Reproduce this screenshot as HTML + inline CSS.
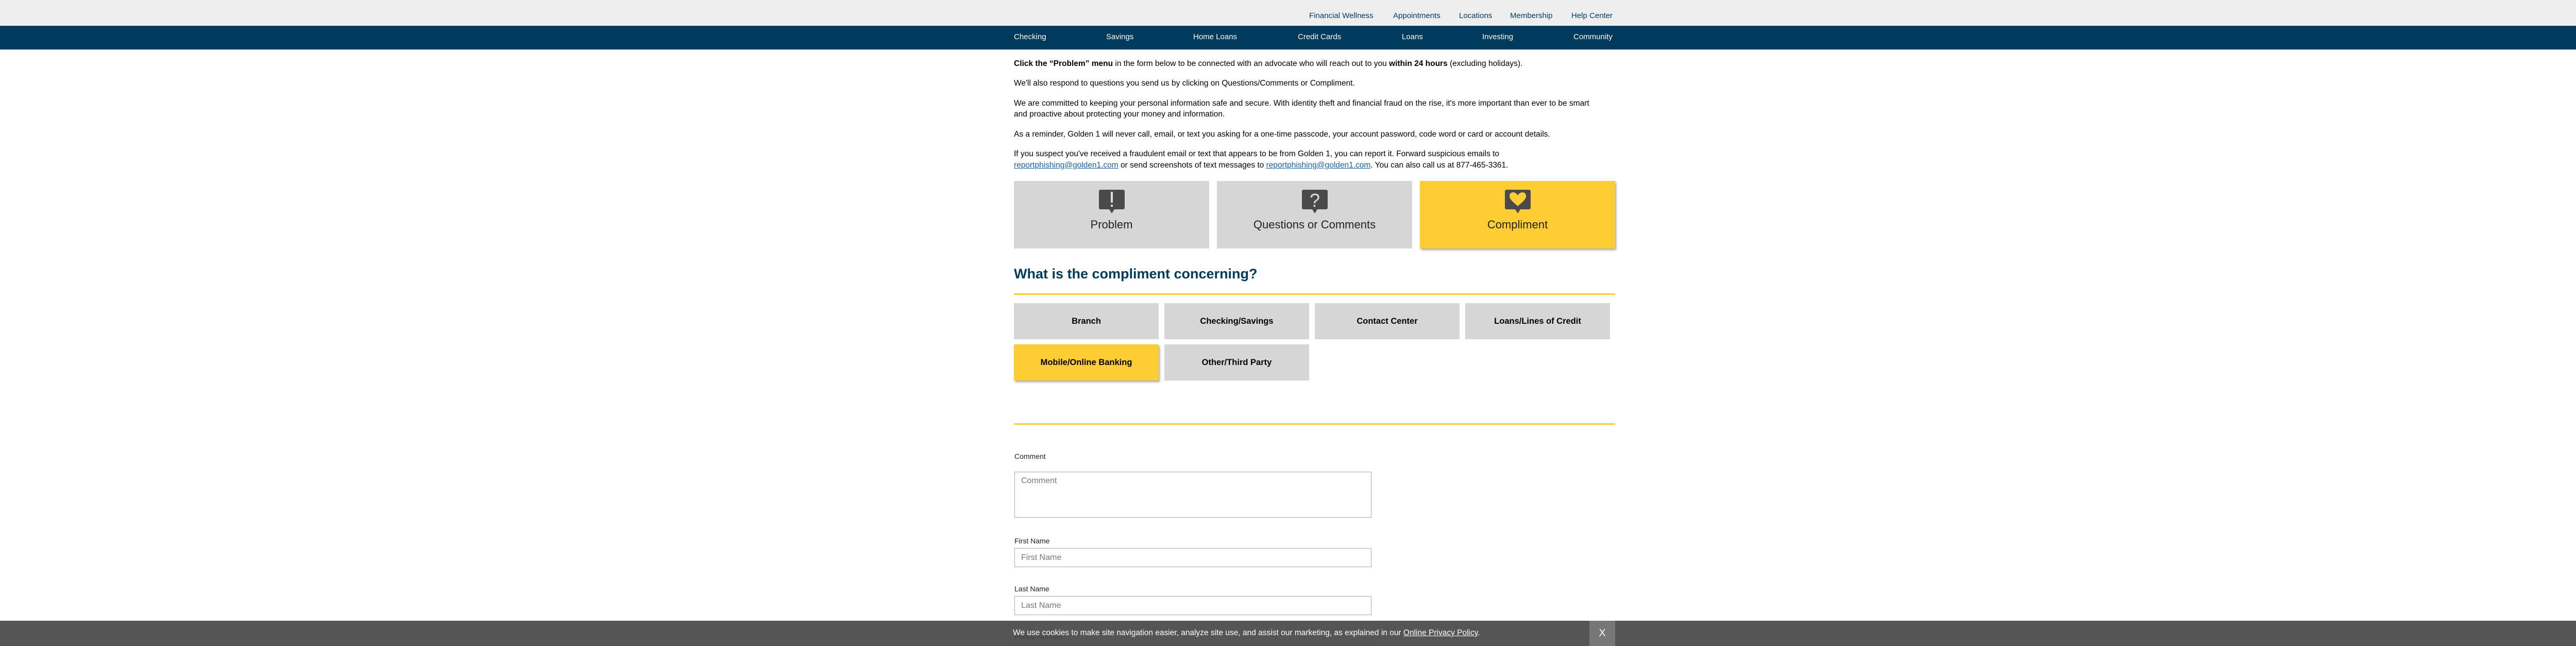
<!DOCTYPE html>
<html><head><meta charset="utf-8"><style>
*{margin:0;padding:0;box-sizing:border-box}
html,body{width:5120px;height:1253px;overflow:hidden}
body{background:#fff;font-family:"Liberation Sans",Arial,sans-serif;color:#000}
#w{position:relative;width:5120px;height:1253px;overflow:hidden}
.a{position:absolute;white-space:nowrap}
#top{position:absolute;left:0;top:0;width:5103px;height:50px;background:#eee}
#nav{position:absolute;left:0;top:50px;width:5103px;height:46px;background:#003a5d}
.tl{font-size:15px;color:#003a5d;top:22px}
.nl{font-size:15px;color:#fff;top:63px}
.p{font-size:15.5px;left:1968px}
.p a{color:#1a5fa8;text-decoration:underline}
.big{position:absolute;top:351px;height:131px;width:379px;background:#d6d6d6;text-align:center}
.big svg{position:absolute;top:17px;left:50%;margin-left:-25px}
.big span{position:absolute;left:0;right:0;top:72px;font-size:22px;color:#222}
.sm{position:absolute;height:70px;width:281px;background:#d6d6d6;text-align:center;line-height:70px;font-size:16.5px;font-weight:bold}
.yl{position:absolute;left:1968px;width:1167px;height:3px;background:#fecd34}
.lab{font-size:14px;color:#222;left:1969px}
.inp{position:absolute;left:1969px;width:693px;border:1px solid #aaa;background:#fff;font-size:16px;color:#777;padding-left:12px}
</style></head><body><div id="w">
<div id="top"></div>
<div class="a tl" style="left:2541px">Financial Wellness</div>
<div class="a tl" style="left:2704px">Appointments</div>
<div class="a tl" style="left:2832px">Locations</div>
<div class="a tl" style="left:2931px">Membership</div>
<div class="a tl" style="left:3050px">Help Center</div>
<div id="nav"></div>
<div class="a nl" style="left:1968px">Checking</div>
<div class="a nl" style="left:2147px">Savings</div>
<div class="a nl" style="left:2316px">Home Loans</div>
<div class="a nl" style="left:2519px">Credit Cards</div>
<div class="a nl" style="left:2721px">Loans</div>
<div class="a nl" style="left:2877px">Investing</div>
<div class="a nl" style="left:3054px">Community</div>

<div class="a p" style="top:115px"><b>Click the “Problem” menu</b> in the form below to be connected with an advocate who will reach out to you <b>within 24 hours</b> (excluding holidays).</div>
<div class="a p" style="top:153px">We'll also respond to questions you send us by clicking on Questions/Comments or Compliment.</div>
<div class="a p" style="top:192px">We are committed to keeping your personal information safe and secure. With identity theft and financial fraud on the rise, it's more important than ever to be smart</div>
<div class="a p" style="top:213px">and proactive about protecting your money and information.</div>
<div class="a p" style="top:252px">As a reminder, Golden 1 will never call, email, or text you asking for a one-time passcode, your account password, code word or card or account details.</div>
<div class="a p" style="top:290px">If you suspect you've received a fraudulent email or text that appears to be from Golden 1, you can report it. Forward suspicious emails to</div>
<div class="a p" style="top:312px"><a>reportphishing@golden1.com</a> or send screenshots of text messages to <a>reportphishing@golden1.com</a>. You can also call us at 877-465-3361.</div>

<div class="big" style="left:1968px"><svg width="50" height="46"><rect width="50" height="38" rx="3" fill="#4a4a4a"/><path d="M20 38L25 46L30 38Z" fill="#4a4a4a"/><rect x="23" y="4" width="4" height="21" fill="#ddd"/><rect x="23" y="29" width="4" height="4" fill="#ddd"/></svg><span>Problem</span></div>
<div class="big" style="left:2362px"><svg width="50" height="46"><rect width="50" height="38" rx="3" fill="#4a4a4a"/><path d="M20 38L25 46L30 38Z" fill="#4a4a4a"/><text x="25" y="33" text-anchor="middle" font-size="36" fill="#ddd" font-family="Liberation Sans">?</text></svg><span>Questions or Comments</span></div>
<div class="big" style="left:2756px;background:#fecd34;box-shadow:2px 3px 4px rgba(0,0,0,.35)"><svg width="50" height="46"><rect width="50" height="38" rx="3" fill="#4a4a4a"/><path d="M20 38L25 46L30 38Z" fill="#4a4a4a"/><path d="M25 32C19 26 9 20 9 12C9 7 13 5 16 5C20 5 23 8 25 11C27 8 30 5 34 5C37 5 41 7 41 12C41 20 31 26 25 32Z" fill="#fecd34"/></svg><span>Compliment</span></div>

<div class="a" style="left:1968px;top:516px;font-size:27px;font-weight:bold;color:#003a5d">What is the compliment concerning?</div>
<div class="yl" style="top:569px"></div>
<div class="sm" style="left:1968px;top:588px">Branch</div>
<div class="sm" style="left:2260px;top:588px">Checking/Savings</div>
<div class="sm" style="left:2552px;top:588px">Contact Center</div>
<div class="sm" style="left:2844px;top:588px">Loans/Lines of Credit</div>
<div class="sm" style="left:1968px;top:668px;background:#fecd34;box-shadow:2px 3px 4px rgba(0,0,0,.35)">Mobile/Online Banking</div>
<div class="sm" style="left:2260px;top:668px">Other/Third Party</div>
<div class="yl" style="top:821px"></div>

<div class="a lab" style="top:877px">Comment</div>
<div class="inp" style="top:915px;height:89px;padding-top:8px">Comment</div>
<div class="a lab" style="top:1041px">First Name</div>
<div class="inp" style="top:1063px;height:37px;line-height:35px">First Name</div>
<div class="a lab" style="top:1134px">Last Name</div>
<div class="inp" style="top:1156px;height:37px;line-height:35px">Last Name</div>
<div class="a lab" style="top:1227px">Phone Number</div>
<div class="inp" style="top:1249px;height:4px"></div>

<div class="a" style="left:5033px;top:1178px;width:70px;height:60px;background:#f9f9f9;box-shadow:0 0 4px rgba(0,0,0,.3);overflow:hidden"><div style="position:absolute;left:17px;top:6px;width:36px;height:36px;border-radius:50%;border:8px solid #4a90e2;border-right-color:#1c3aa9"></div></div>

<div class="a" style="left:0;top:1204px;width:5103px;height:49px;background:rgba(70,70,70,.92)"></div>
<div class="a" style="left:1966px;top:1219px;font-size:15.5px;color:#fff">We use cookies to make site navigation easier, analyze site use, and assist our marketing, as explained in our <u>Online Privacy Policy</u>.</div>
<div class="a" style="left:3085px;top:1204px;width:50px;height:49px;background:#777;color:#fff;font-size:20px;text-align:center;line-height:49px">X</div>

<div class="a" style="left:5103px;top:0;width:17px;height:1253px;background:#424242"></div>
<div class="a" style="left:5107px;top:8px;width:0;height:0;border-left:5px solid transparent;border-right:5px solid transparent;border-bottom:5px solid #fff"></div>
<div class="a" style="left:5107px;top:1240px;width:0;height:0;border-left:5px solid transparent;border-right:5px solid transparent;border-top:5px solid #fff"></div>
</div></body></html>
